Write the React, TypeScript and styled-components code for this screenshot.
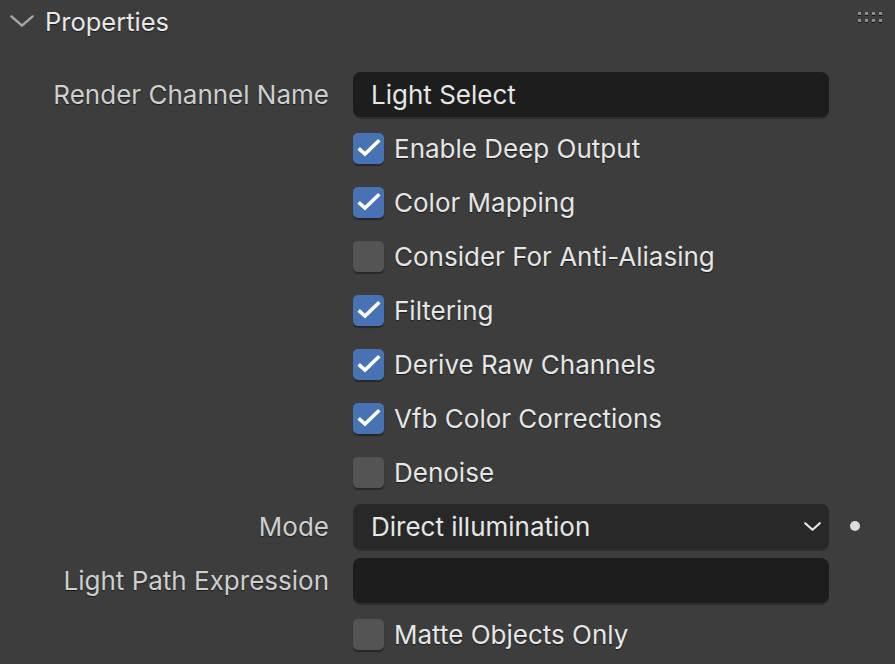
import React from "react";
import styled, { createGlobalStyle } from "styled-components";

const Global = createGlobalStyle`
  html, body { margin: 0; padding: 0; background: #3d3d3d; }
  body { font-family: Inter, "Noto Sans", sans-serif; }
`;

const Panel = styled.div`
  width: 895px;
  height: 664px;
  background: #3d3d3d;
  overflow: hidden;
  position: relative;
`;

const Header = styled.div`
  height: 42px;
  display: flex;
  align-items: center;
  padding-left: 9px;
  gap: 10px;
  position: relative;
`;

const Title = styled.span`
  font-size: 25.5px;
  color: #e8e8e8;
  text-shadow: 0 1px 1px rgba(0,0,0,0.6);
`;

const Grip = styled.div`
  position: absolute;
  right: 13px;
  top: 12px;
  display: grid;
  grid-template-columns: repeat(4, 3px);
  grid-template-rows: repeat(2, 3px);
  column-gap: 4px;
  row-gap: 4px;
  & > span {
    width: 3px;
    height: 3px;
    background: #8c8c8c;
    box-shadow: 0 1px 0 #121212;
  }
`;

const Body = styled.div`
  padding-top: 25px;
  display: flex;
  flex-direction: column;
`;

const Row = styled.div`
  height: 54px;
  display: grid;
  grid-template-columns: 329px 476px 1fr;
  column-gap: 24px;
  align-items: center;
`;

const Label = styled.div`
  text-align: right;
  font-size: 26px;
  color: #cfcfcf;
  text-shadow: 0 1px 1px rgba(0,0,0,0.6);
  white-space: nowrap;
`;

const Field = styled.div<{ $bg: string }>`
  height: 45px;
  box-sizing: border-box;
  border-radius: 8px;
  background: ${(p) => p.$bg};
  box-shadow: 0 2px 0 rgba(0,0,0,0.25);
  display: flex;
  align-items: center;
  justify-content: space-between;
  padding: 0 7px 0 18px;
  font-size: 26px;
  color: #e6e6e6;
`;

const CheckRow = styled.label`
  display: flex;
  align-items: center;
  gap: 10px;
  font-size: 26px;
  color: #e6e6e6;
  text-shadow: 0 1px 1px rgba(0,0,0,0.6);
  white-space: nowrap;
`;

const Box = styled.span<{ $on: boolean }>`
  width: 31px;
  height: 31px;
  border-radius: 5px;
  background: ${(p) => (p.$on ? "#4772b3" : "#545454")};
  box-shadow: 0 2px 1px rgba(0,0,0,0.35);
  display: flex;
  flex: none;
`;

const Dot = styled.span`
  width: 10px;
  height: 10px;
  border-radius: 50%;
  background: #dcdcdc;
  margin-left: -3px;
  display: block;
`;

const Check = () => (
  <svg width="31" height="31" viewBox="0 0 31 31">
    <path d="M7 16.5 L12 21 L25 8.5" fill="none" stroke="#ffffff" strokeWidth="3.6" strokeLinecap="square" strokeLinejoin="miter" />
  </svg>
);

const Chevron = ({ w, h, color, sw }: { w: number; h: number; color: string; sw: number }) => (
  <svg width={w} height={h} viewBox={`0 0 ${w} ${h}`}>
    <path d={`M${sw} ${sw} L${w / 2} ${h - sw} L${w - sw} ${sw}`} fill="none" stroke={color} strokeWidth={sw} strokeLinecap="round" strokeLinejoin="round" />
  </svg>
);

const checks: [string, boolean][] = [
  ["Enable Deep Output", true],
  ["Color Mapping", true],
  ["Consider For Anti-Aliasing", false],
  ["Filtering", true],
  ["Derive Raw Channels", true],
  ["Vfb Color Corrections", true],
  ["Denoise", false],
];

const CheckItem = ({ text, on }: { text: string; on: boolean }) => (
  <Row>
    <span />
    <CheckRow>
      <Box $on={on}>{on && <Check />}</Box>
      {text}
    </CheckRow>
  </Row>
);

export default function App() {
  return (
    <Panel>
      <Global />
      <Header>
        <Chevron w={26} h={14} sw={2.4} color="#a8a8a8" />
        <Title>Properties</Title>
        <Grip>
          {Array.from({ length: 8 }).map((_, i) => (
            <span key={i} />
          ))}
        </Grip>
      </Header>
      <Body>
        <Row>
          <Label>Render Channel Name</Label>
          <Field $bg="#1d1d1d">Light Select</Field>
        </Row>
        {checks.map(([t, on]) => (
          <CheckItem key={t} text={t} on={on} />
        ))}
        <Row>
          <Label>Mode</Label>
          <Field $bg="#282828">
            Direct illumination
            <Chevron w={19} h={11} sw={2.2} color="#e6e6e6" />
          </Field>
          <Dot />
        </Row>
        <Row>
          <Label>Light Path Expression</Label>
          <Field $bg="#1d1d1d" />
        </Row>
        <CheckItem text="Matte Objects Only" on={false} />
      </Body>
    </Panel>
  );
}
